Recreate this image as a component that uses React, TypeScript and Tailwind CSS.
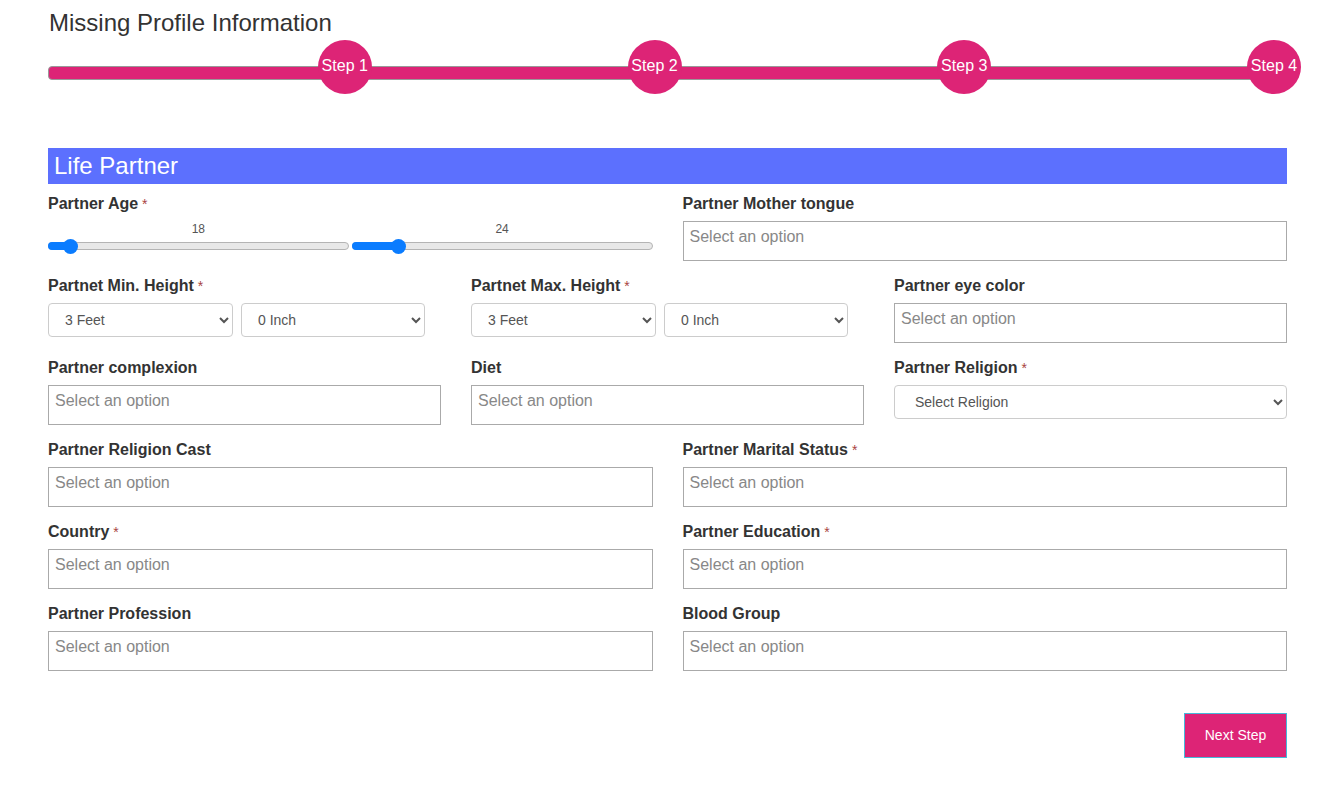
import React from 'react';

const PINK = 'bg-[#dd2476]';

function Label({ text, required }: { text: string; required?: boolean }) {
  return (
    <div className="h-5 mb-[7px] text-[16px] leading-5 font-bold text-[#333]">
      {text}
      {required && <span className="ml-1 font-normal text-[14px] text-[#a94442]">*</span>}
    </div>
  );
}

function OptionBox() {
  return (
    <div className="h-10 border border-[#aaa] bg-white px-[6px] pt-[1px] text-[16px] leading-[28px] text-[#888]">
      Select an option
    </div>
  );
}

function SmallSelect({ value, className }: { value: string; className: string }) {
  return (
    <select
      className={`h-[34px] border border-[#ccc] rounded-[4px] bg-white pl-3 pr-2 text-[14px] text-[#555] ${className}`}
      defaultValue={value}
    >
      <option>{value}</option>
    </select>
  );
}

function Slider({ value, fill }: { value: string; fill: number }) {
  return (
    <div>
      <div className="h-4 text-center text-[12px] leading-4 text-[#555]">{value}</div>
      <div className="relative h-[18px] flex items-center">
        <div className="w-full h-[8px] rounded-full border border-[#b4b4b4] bg-[#e8e8e8]" />
        <div className="absolute left-0 top-[5px] h-[8px] rounded-full bg-[#0a7cff]" style={{ width: fill }} />
        <div
          className="absolute top-[1.5px] w-[15px] h-[15px] rounded-full bg-[#0a7cff]"
          style={{ left: fill - 7.5 }}
        />
      </div>
    </div>
  );
}

function Field({ label, required }: { label: string; required?: boolean }) {
  return (
    <div>
      <Label text={label} required={required} />
      <OptionBox />
    </div>
  );
}

export default function App() {
  const steps = ['Step 1', 'Step 2', 'Step 3', 'Step 4'];
  return (
    <div className="bg-white min-h-[789px] font-['Liberation_Sans',Arial,sans-serif]">
      <div className="ml-[48px] w-[1239px] pt-[10px]">
        <h3 className="text-[24px] leading-[26px] text-[#333] pl-[1px]">Missing Profile Information</h3>

        {/* progress */}
        <div className="relative mt-[4px] h-[54px] pt-[26px]">
          <div className={`h-[14px] rounded-[4px] border border-[#999] ${PINK}`} />
          {steps.map((s, i) => (
            <div
              key={s}
              className={`absolute top-0 w-[54px] h-[54px] rounded-full ${PINK} flex items-center justify-center pb-[2px] text-[16px] text-white`}
              style={{ left: `calc(${(i + 1) * 25}% - 40px)` }}
            >
              {s}
            </div>
          ))}
        </div>

        {/* section header */}
        <div className="mt-[54px] h-[36px] bg-[#5c70fe] pl-[6px] text-[24px] leading-[36px] text-white">
          Life Partner
        </div>

        <div className="mt-[10px] flex flex-col gap-[15px]">
          <div className="grid grid-cols-2 gap-x-[30px]">
            <div>
              <Label text="Partner Age" required />
              <div className="grid grid-cols-2 gap-[3px]">
                <Slider value="18" fill={22} />
                <Slider value="24" fill={47} />
              </div>
            </div>
            <Field label="Partner Mother tongue" />
          </div>

          <div className="grid grid-cols-3 gap-x-[30px]">
            <div>
              <Label text="Partnet Min. Height" required />
              <div className="flex gap-2">
                <SmallSelect value="3 Feet" className="w-[185px]" />
                <SmallSelect value="0 Inch" className="w-[184px]" />
              </div>
            </div>
            <div>
              <Label text="Partnet Max. Height" required />
              <div className="flex gap-2">
                <SmallSelect value="3 Feet" className="w-[185px]" />
                <SmallSelect value="0 Inch" className="w-[184px]" />
              </div>
            </div>
            <Field label="Partner eye color" />
          </div>

          <div className="grid grid-cols-3 gap-x-[30px]">
            <Field label="Partner complexion" />
            <Field label="Diet" />
            <div>
              <Label text="Partner Religion" required />
              <SmallSelect value="Select Religion" className="w-full pl-4" />
            </div>
          </div>

          <div className="grid grid-cols-2 gap-x-[30px]">
            <Field label="Partner Religion Cast" />
            <Field label="Partner Marital Status" required />
          </div>

          <div className="grid grid-cols-2 gap-x-[30px]">
            <Field label="Country" required />
            <Field label="Partner Education" required />
          </div>

          <div className="grid grid-cols-2 gap-x-[30px]">
            <Field label="Partner Profession" />
            <Field label="Blood Group" />
          </div>
        </div>

        <div className="mt-[42px] flex justify-end">
          <button className={`w-[103px] h-[45px] ${PINK} border border-[#46b8da] text-[14px] text-white`}>
            Next Step
          </button>
        </div>
      </div>
    </div>
  );
}
